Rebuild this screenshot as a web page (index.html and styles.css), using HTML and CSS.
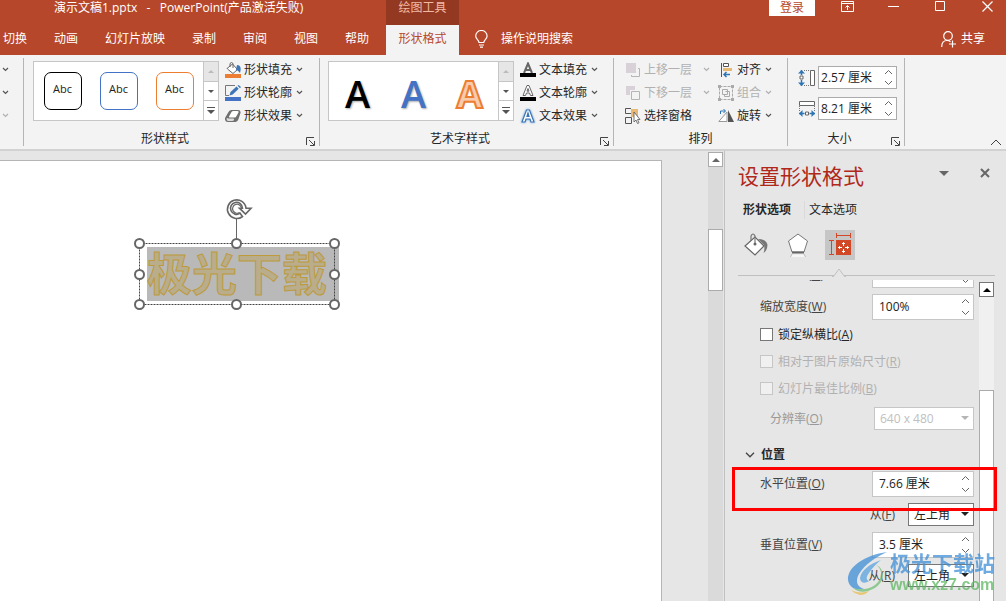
FILE: index.html
```html
<!DOCTYPE html>
<html lang="zh-CN">
<head>
<meta charset="utf-8">
<title>演示文稿1.pptx - PowerPoint</title>
<link rel="stylesheet" href="styles.css">
</head>
<body>
<svg class="defs" aria-hidden="true">
  <symbol id="chev" viewBox="0 0 7 5"><path d="M1 1l2.500 2.500L6 1" fill="none" stroke="currentColor" stroke-width="1.2"/></symbol>
  <symbol id="chev-up" viewBox="0 0 9 6"><path d="M1 5l3.500-3.500L8 5" fill="none" stroke="currentColor"/></symbol>
  <symbol id="chev-down" viewBox="0 0 9 6"><path d="M1 1l3.500 3.500L8 1" fill="none" stroke="currentColor"/></symbol>
  <symbol id="tri-up" viewBox="0 0 8 4"><path d="M0 4l4-4 4 4z" fill="currentColor"/></symbol>
  <symbol id="tri-down" viewBox="0 0 8 4"><path d="M0 0l4 4 4-4z" fill="currentColor"/></symbol>
  <symbol id="more" viewBox="0 0 8 7"><path d="M0 .5h8" stroke="currentColor"/><path d="M0 3l4 4 4-4z" fill="currentColor"/></symbol>
  <symbol id="launch" viewBox="0 0 9 9"><path d="M.5 8V.5H8M3 3l5 5M8.500 4v4.500H4" fill="none" stroke="#444"/></symbol>
</svg>
<div class="app">
  <header class="titlebar">
    <div class="doc-title">演示文稿1.pptx&nbsp;&nbsp; -&nbsp;&nbsp; PowerPoint(产品激活失败)</div>
    <div class="context-title">绘图工具</div>
    <div class="window-tools">
      <button class="login">登录</button>
      <button class="win" aria-label="功能区显示选项"><svg width="13" height="11" viewBox="0 0 13 11"><path d="M.5 .5h12v10H.5zM.5 2.500h12M6.500 9V4.500M4.500 6.500l2-2 2 2" fill="none" stroke="#fff"/></svg></button>
      <button class="win" aria-label="最小化"><svg width="11" height="11" viewBox="0 0 11 11"><path d="M0 5.500h11" stroke="#fff"/></svg></button>
      <button class="win" aria-label="最大化"><svg width="11" height="11" viewBox="0 0 11 11"><path d="M.5 .5h9v9h-9z" fill="none" stroke="#fff"/></svg></button>
      <button class="win" aria-label="关闭"><svg width="11" height="11" viewBox="0 0 11 11"><path d="M.5 .5l10 10M10.500 .5l-10 10" stroke="#fff" stroke-width="1.2"/></svg></button>
    </div>
    <nav class="tabs">
      <button>切换</button><button>动画</button><button>幻灯片放映</button><button>录制</button><button>审阅</button><button>视图</button><button>帮助</button>
    </nav>
    <button class="tab-active">形状格式</button>
    <div class="tab-tools">
      <button class="tell"><svg width="13" height="18" viewBox="0 0 13 18"><path d="M4 12.500c0-2.500-3.300-3.500-3.300-6.500a5.600 5.400 0 0 1 11.400 0c0 3-3.300 4-3.300 6.500zM4 15h5M5 17.200h3" fill="none" stroke="#fff" stroke-width="1.200"/></svg>操作说明搜索</button>
      <button class="share"><svg width="16" height="17" viewBox="0 0 16 17"><path d="M.7 16c0-4 2-6.500 5.300-6.500 1.500 0 2.500.4 3.500 1.200M11.500 9.500v7M8 13h7" fill="none" stroke="#fff" stroke-width="1.200"/><circle cx="7" cy="5" r="4.300" fill="none" stroke="#fff" stroke-width="1.200"/></svg>共享</button>
    </div>
  </header>

  <section class="ribbon">
    <div class="group cut">
      <div class="stack"><button class="cmd"><svg class="chev"><use href="#chev"/></svg></button><button class="cmd"><svg class="chev"><use href="#chev"/></svg></button><button class="cmd" disabled><svg class="chev"><use href="#chev"/></svg></button></div>
    </div>
    <div class="group">
      <div class="content styles">
        <div class="gallery">
          <div class="tiles"><button class="tile black">Abc</button><button class="tile blue">Abc</button><button class="tile orange">Abc</button></div>
          <div class="gallery-nav"><button disabled aria-label="上一行"><svg width="6" height="3"><use href="#tri-up"/></svg></button><button aria-label="下一行"><svg width="6" height="3"><use href="#tri-down"/></svg></button><button aria-label="其他"><svg width="8" height="7"><use href="#more"/></svg></button></div>
        </div>
        <div class="stack">
          <button class="cmd"><svg width="16" height="16" viewBox="0 0 16 16"><path d="M2 6.500L7.500 2l5 5.500L8 11.500 2.500 7z" fill="#fff" stroke="#666"/><path d="M5 5V1.500Q6.500-.5 8 1.500V6" fill="none" stroke="#666"/><path d="M12 3c3.500 0 4.500 3 3 8C14 9.500 12.500 8 11 8z" fill="#3e76b5"/><path d="M0 12h16v4H0z" fill="#ed7d31"/></svg>形状填充<svg class="chev"><use href="#chev"/></svg></button>
          <button class="cmd"><svg width="16" height="16" viewBox="0 0 16 16"><path d="M10 .5H.5v10H4" fill="none" stroke="#777"/><path d="M4.500 10.500l1-3.500 6-5.500 2.200 2.200-6 5.800z" fill="#3e76b5"/><path d="M12.500 .8l1-.8L16 2l-1 1.200z" fill="#3e76b5"/><path d="M0 12h16v4H0z" fill="#4472c4"/></svg>形状轮廓<svg class="chev"><use href="#chev"/></svg></button>
          <button class="cmd"><svg width="16" height="16" viewBox="0 0 16 16"><path d="M0 10l3.500-6q1-2 3-2h6.500q3 0 2.500 3l-2 6q-1 3-3.500 3H3q-3.500 0-3-4z" fill="#707070"/><path d="M4 8.500L6.500 4q.5-1 2-1h4q1.700 0 1 1.500L11.500 8q-.5 1.500-2 1.500H5q-1.500 0-1-1z" fill="#fff"/><path d="M1.500 10.500q.5-1 2 0h5q1 .5.500 1.500t-2 1H3q-1.500-.5-1.500-2.500z" fill="#ddd"/></svg>形状效果<svg class="chev"><use href="#chev"/></svg></button>
        </div>
      </div>
      <div class="caption"><span>形状样式</span><button class="launch" aria-label="形状样式选项"><svg width="9" height="9"><use href="#launch"/></svg></button></div>
    </div>
    <div class="group">
      <div class="content art">
        <div class="gallery">
          <div class="tiles letters"><button class="wa black">A</button><button class="wa blue">A</button><button class="wa orange">A</button></div>
          <div class="gallery-nav"><button disabled aria-label="上一行"><svg width="6" height="3"><use href="#tri-up"/></svg></button><button aria-label="下一行"><svg width="6" height="3"><use href="#tri-down"/></svg></button><button aria-label="其他"><svg width="8" height="7"><use href="#more"/></svg></button></div>
        </div>
        <div class="stack">
          <button class="cmd"><svg width="16" height="16" viewBox="0 0 16 16"><path d="M4 11L8 1.500 12 11M5.500 8h5" fill="none" stroke="#666" stroke-width="2"/><path d="M0 11h16v4H0z"/></svg>文本填充<svg class="chev"><use href="#chev"/></svg></button>
          <button class="cmd"><svg width="16" height="16" viewBox="0 0 16 16"><path d="M3 10.500L7 .5h2l4 10h-2.500L9.500 8h-3l-1 2.500zM7 6.200h2L8 3.500z" fill="#fff" stroke="#666"/><path d="M0 12h16v4H0z"/></svg>文本轮廓<svg class="chev"><use href="#chev"/></svg></button>
          <button class="cmd"><svg class="glow" width="16" height="16" viewBox="0 0 16 16"><path d="M2 14L6.500 2h3L14 14h-3l-1-3H6l-1 3zM7 8.500h2L8 5z" fill="#fff" stroke="#3e76b5" stroke-width="1.200"/></svg>文本效果<svg class="chev"><use href="#chev"/></svg></button>
        </div>
      </div>
      <div class="caption"><span>艺术字样式</span><button class="launch" aria-label="艺术字样式选项"><svg width="9" height="9"><use href="#launch"/></svg></button></div>
    </div>
    <div class="group">
      <div class="content arrange">
        <div class="stack">
          <button class="cmd wide" disabled><svg width="16" height="16" viewBox="0 0 16 16"><path d="M1 1h10v10H1z" fill="#d8d2d8"/><path d="M13 6.500h1.500v8h-8V13" fill="none" stroke="#b5b5b5"/></svg>上移一层<svg class="chev"><use href="#chev"/></svg></button>
          <button class="cmd wide" disabled><svg width="16" height="16" viewBox="0 0 16 16"><path d="M1 1h9v4H5v5H1z" fill="#d8d2d8"/><path d="M6.500 6.500h8v8h-8z" fill="none" stroke="#b5b5b5"/></svg>下移一层<svg class="chev"><use href="#chev"/></svg></button>
          <button class="cmd wide"><svg width="16" height="16" viewBox="0 0 16 16"><path d="M6 1h7v8H6z" fill="#e9b872"/><path d="M6 .5H.5v5H6M.5 9.500h6v6h-6z" fill="none" stroke="#555"/><path d="M9 4v10l2-2 1.500 3.500 1.500-.7-1.500-3.300H15z" fill="#fff" stroke="#555" stroke-width=".8"/></svg>选择窗格</button>
        </div>
        <div class="stack">
          <button class="cmd"><svg width="16" height="16" viewBox="0 0 16 16"><path d="M3.500 1v14" stroke="#555"/><path d="M5.500 1.500h5v3h-5z" fill="#fff" stroke="#555"/><path d="M5 6h9v3H5z" fill="#e9b872"/><path d="M12 12.500H6M8.500 10L6 12.500 8.500 15" fill="none" stroke="#2e75b6" stroke-width="1.500"/></svg>对齐<svg class="chev"><use href="#chev"/></svg></button>
          <button class="cmd" disabled><svg width="16" height="16" viewBox="0 0 16 16"><path d="M1.500 1.500h13v13h-13z" fill="none" stroke="#aaa" stroke-dasharray="3 1"/><path d="M0 0h3v3H0zM13 0h3v3h-3zM0 13h3v3H0zM13 13h3v3h-3z" fill="#aaa"/><path d="M4.500 4.500h5v5h-5zM7.500 6.500h4v5h-5v-2" fill="none" stroke="#aaa"/></svg>组合<svg class="chev"><use href="#chev"/></svg></button>
          <button class="cmd"><svg width="16" height="16" viewBox="0 0 16 16"><path d="M9 4v9.500H.8z" fill="#fff" stroke="#999"/><path d="M10 2v12h6z" fill="#555"/><path d="M2.500 6V3H7M5.500 1L7.500 3l-2 2" fill="none" stroke="#2e75b6"/></svg>旋转<svg class="chev"><use href="#chev"/></svg></button>
        </div>
      </div>
      <div class="caption centered"><span>排列</span></div>
    </div>
    <div class="group">
      <div class="content size">
        <label class="size-row" title="高度"><svg width="18" height="18" viewBox="0 0 18 18"><path d="M3.500 1v16" stroke="#2e75b6" stroke-width="1.500"/><path d="M0 4.500L3.500 1 7 4.500zM0 13.500L3.500 17 7 13.500z" fill="#2e75b6"/><path d="M1 6h5v5H1z" fill="#f3f3f3"/><path d="M2 7h3v3H2z" fill="#fff" stroke="#666"/><path d="M6 1.500h6M6 16.500h6" stroke="#777" stroke-dasharray="1 1"/><path d="M12.500 1.500h4v15h-4z" fill="#fff" stroke="#666"/></svg><span class="spin"><input type="text" value="2.57 厘米" aria-label="高度"><span class="steps"><button aria-label="增加"><svg width="9" height="6"><use href="#chev-up"/></svg></button><button aria-label="减少"><svg width="9" height="6"><use href="#chev-down"/></svg></button></span></span></label>
        <label class="size-row" title="宽度"><svg width="18" height="18" viewBox="0 0 18 18"><path d="M1.500 1.500h15v4h-15z" fill="#fff" stroke="#666"/><path d="M1.500 6v6M16.500 6v6" stroke="#777" stroke-dasharray="1 1"/><path d="M1 13.500h16" stroke="#2e75b6" stroke-width="1.500"/><path d="M4.500 10L1 13.500 4.500 17zM13.500 10l3.500 3.500-3.500 3.500z" fill="#2e75b6"/><path d="M6.500 11h5v5h-5z" fill="#f3f3f3"/><path d="M7.500 12h3v3h-3z" fill="#fff" stroke="#666"/></svg><span class="spin"><input type="text" value="8.21 厘米" aria-label="宽度"><span class="steps"><button aria-label="增加"><svg width="9" height="6"><use href="#chev-up"/></svg></button><button aria-label="减少"><svg width="9" height="6"><use href="#chev-down"/></svg></button></span></span></label>
      </div>
      <div class="caption"><span>大小</span><button class="launch" aria-label="大小选项"><svg width="9" height="9"><use href="#launch"/></svg></button></div>
    </div>
    <button class="collapse" aria-label="折叠功能区"><svg width="12" height="7" viewBox="0 0 12 7"><path d="M1 6l5-5 5 5" fill="none" stroke="#444"/></svg></button>
  </section>

  <main class="workspace">
    <div class="slide">
      <div class="shape">
        <span class="shape-text">极光下载</span>
        <svg class="handles" width="206" height="108" viewBox="0 0 206 108">
          <path d="M5.500 44.500h195v61H5.500z" fill="none" stroke="#444" stroke-dasharray="2 1"/>
          <path d="M102.500 20v21" stroke="#666"/>
          <g fill="#fff" stroke="#666" stroke-width="2"><circle cx="5.500" cy="44.500" r="4.500"/><circle cx="102.500" cy="44.500" r="4.500"/><circle cx="200.500" cy="44.500" r="4.500"/><circle cx="5.500" cy="75.500" r="4.500"/><circle cx="200.500" cy="75.500" r="4.500"/><circle cx="5.500" cy="105.500" r="4.500"/><circle cx="102.500" cy="105.500" r="4.500"/><circle cx="200.500" cy="105.500" r="4.500"/></g>
          <path d="M108.500 17.500a9.300 9.300 0 1 1 3.500-8.300h5L111.500 15l-6-5.800h3a6 6 0 1 0-2.500 5z" fill="#fff" stroke="#666" stroke-width="1.600"/><path d="M105.500 13.500a4.500 4.500 0 1 1 2-4.500" fill="none" stroke="#666" stroke-width="1.200"/>
        </svg>
      </div>
    </div>
    <div class="scroll doc-scroll"><button aria-label="向上滚动"><svg width="8" height="4"><use href="#tri-up"/></svg></button><div class="thumb"></div></div>

    <aside class="pane">
      <div class="pane-head"><h1>设置形状格式</h1><button aria-label="任务窗格选项"><svg width="10" height="5" viewBox="0 0 10 5"><path d="M0 0h10L5 5z" fill="#666"/></svg></button><button aria-label="关闭窗格"><svg width="10" height="10" viewBox="0 0 10 10"><path d="M1 1l8 8M9 1L1 9" stroke="#666" stroke-width="2"/></svg></button></div>
      <div class="pane-tabs"><button class="on">形状选项</button><button>文本选项</button></div>
      <div class="pane-icons">
        <button aria-label="填充与线条"><svg width="24" height="24" viewBox="0 0 24 24"><path d="M1 13L11 4l9 9-9 9z" fill="#fff" stroke="#666" stroke-width="1.200"/><path d="M7 8V3q2-4 4 0v8" fill="none" stroke="#777" stroke-width="1.200"/><circle cx="11" cy="11" r="1.500" fill="#666"/><path d="M14 6q8.500 0 9.500 6-.5 6-4 8 1.500-4 .5-8z" fill="#777"/></svg></button>
        <button aria-label="效果"><svg width="24" height="24" viewBox="0 0 24 24"><path d="M12 1l9.500 7L18 19H6L2.500 8z" fill="#fff" stroke="#777"/><path d="M6 19.500h12" stroke="#666" stroke-width="2"/><path d="M6 21.500h12l1.500 2.500h-15z" fill="#f6f6f6"/><path d="M6 21l-1.500 3M18 21l1.500 3" stroke="#bbb"/></svg></button>
        <button class="on" aria-label="大小与属性"><svg width="24" height="24" viewBox="0 0 24 24"><path d="M8.500 2.500h14M8.500 0v5M22.500 0v5M3.500 7.500v14M1 7.500h5M1 21.500h5" fill="none" stroke="#d24726"/><path d="M8 7h15v15H8z" fill="#d24726"/><path d="M15.500 9v4M15.500 16v4M10 14.500h4M17 14.500h4M14 11l1.500-1.500L17 11M14 18l1.500 1.500L17 18M12 13l-1.500 1.500L12 16M19 13l1.500 1.500L19 16" fill="none" stroke="#fff"/></svg></button>
      </div>
      <svg class="notch" width="14" height="9" viewBox="0 0 14 9"><path d="M0 8.500h1.500L7 1l5.500 7.500H14" fill="#e6e6e6" stroke="#c0c0c0"/></svg>
      <div class="pane-view">
        <form class="props">
          <div class="row first"><label for="sh">缩放高度(<u>H</u>)</label><span class="spin"><input id="sh" type="text" value="100%"><span class="steps"><button type="button" aria-label="增加"><svg width="9" height="6"><use href="#chev-up"/></svg></button><button type="button" aria-label="减少"><svg width="9" height="6"><use href="#chev-down"/></svg></button></span></span></div>
          <div class="row"><label for="sw">缩放宽度(<u>W</u>)</label><span class="spin"><input id="sw" type="text" value="100%"><span class="steps"><button type="button" aria-label="增加"><svg width="9" height="6"><use href="#chev-up"/></svg></button><button type="button" aria-label="减少"><svg width="9" height="6"><use href="#chev-down"/></svg></button></span></span></div>
          <div class="checks">
            <label><input type="checkbox">锁定纵横比(<u>A</u>)</label>
            <label class="off"><input type="checkbox" disabled>相对于图片原始尺寸(<u>R</u>)</label>
            <label class="off"><input type="checkbox" disabled>幻灯片最佳比例(<u>B</u>)</label>
          </div>
          <div class="row resolution"><label for="res">分辨率(<u>O</u>)</label><span class="pick"><select id="res" disabled><option>640 x 480</option></select><svg width="8" height="4"><use href="#tri-down"/></svg></span></div>
          <h2><svg width="10" height="6" viewBox="0 0 10 6"><path d="M1 .8l4 4 4-4" fill="none" stroke="#444" stroke-width="1.300"/></svg>位置</h2>
          <div class="row"><label for="px">水平位置(<u>O</u>)</label><span class="spin"><input id="px" type="text" value="7.66 厘米"><span class="steps"><button type="button" aria-label="增加"><svg width="9" height="6"><use href="#chev-up"/></svg></button><button type="button" aria-label="减少"><svg width="9" height="6"><use href="#chev-down"/></svg></button></span></span></div>
          <div class="row from"><label for="fx">从(<u>F</u>)</label><span class="pick"><select id="fx"><option>左上角</option></select><svg width="8" height="4"><use href="#tri-down"/></svg></span></div>
          <div class="row"><label for="py">垂直位置(<u>V</u>)</label><span class="spin"><input id="py" type="text" value="3.5 厘米"><span class="steps"><button type="button" aria-label="增加"><svg width="9" height="6"><use href="#chev-up"/></svg></button><button type="button" aria-label="减少"><svg width="9" height="6"><use href="#chev-down"/></svg></button></span></span></div>
          <div class="row from"><label for="fy">从(<u>R</u>)</label><span class="pick"><select id="fy"><option>左上角</option></select><svg width="8" height="4"><use href="#tri-down"/></svg></span></div>
        </form>
        <div class="scroll pane-scroll"><button aria-label="向上滚动"><svg width="8" height="4"><use href="#tri-up"/></svg></button><div class="thumb"></div></div>
      </div>
      <div class="highlight"></div>
      <div class="watermark">
        <svg width="44" height="44" viewBox="0 0 44 44"><path d="M40 1C18 4 0 16 1 29c1 8 9 11 16 9C10 36 8 30 12 23 18 13 29 6 40 1z" fill="#3f8fd6"/><path d="M34 9C22 13 14 20 13 27c0 5 5 6 9 3-3-1-3-4 0-8 3-5 7-9 12-13z" fill="#5aa3df"/><path d="M29 14c7 4 7 14-1 20-7 5-15 5-22 3 3 3 9 5 15 3 11-3 17-12 14-20-1-3-3-5-6-6z" fill="#6fbf73"/><path d="M4 39c6 3 12 3 18 1-3 3-6 4-9 4-4-1-7-3-9-5z" fill="#e7bd4d"/></svg>
        <div><b>极光下载站</b><span>www.xz7.com</span></div>
      </div>
    </aside>
  </main>
</div>
</body>
</html>
```
FILE: styles.css
```css
* { box-sizing: border-box; }
body { margin: 0; font: 12px/16px "Open Sans", "Noto Sans CJK SC", sans-serif; color: #262626; }
button, input, select { font: inherit; color: inherit; margin: 0; padding: 0; border: 0; background: none; }
svg { display: block; flex: none; }
.defs { position: absolute; width: 0; height: 0; }
.app { display: flex; flex-direction: column; height: 100vh; overflow: hidden; background: #e6e6e6; }

/* Title bar and tabs */
.titlebar { display: grid; grid-template-columns: auto auto 1fr; grid-template-rows: 25px 30px; background: #b7472a; color: #fff; }
.doc-title { padding-left: 54px; white-space: nowrap; }
.context-title { background: #933922; color: #f1b9a6; text-align: center; }
.window-tools { display: flex; justify-content: flex-end; align-items: flex-start; padding-right: 14px; }
.login { background: #fff; color: #b7472a; width: 46px; height: 16px; line-height: 14px; margin-right: 26px; }
.win { display: flex; justify-content: flex-start; height: 12px; width: 47px; align-items: center; }
.win:last-child { width: 10px; }
.tabs { display: flex; gap: 27px; padding: 0 17px 0 3px; }
.tabs button { white-space: nowrap; padding-bottom: 2px; }
.tab-active { background: #f3f3f3; color: #b7472a; width: 73px; padding-bottom: 2px; }
.tab-tools { display: flex; justify-content: space-between; padding: 0 21px 0 16px; }
.tell, .share { display: flex; align-items: center; padding-bottom: 2px; }
.tell { gap: 13px; }
.share { gap: 4px; }

/* Ribbon */
.ribbon { display: flex; height: 96px; padding: 3px 0; background: #f3f3f3; border-bottom: 2px solid #d2d2d2; }
.group { display: flex; flex-direction: column; justify-content: space-between; border-right: 1px solid #b5b5b5; }
.cut { width: 24px; padding-left: 1px; }
.content { display: flex; gap: 6px; }
.styles { padding: 0 16px 0 9px; }
.art { padding: 0 15px 0 8px; }
.arrange { padding: 0 15px 0 11px; gap: 8px; }
.size { flex-direction: column; gap: 8px; padding: 8px 7px 0 10px; }
.stack { display: flex; flex-direction: column; }
.cmd { display: flex; align-items: center; gap: 3px; height: 23px; white-space: nowrap; }
.chev { width: 7px; height: 5px; margin-left: 1px; color: #555; }
.wide .chev { margin-left: 8px; }
.cmd:disabled, .cmd:disabled .chev { color: #b1b1b1; }
.glow { filter: drop-shadow(0 0 1px #5b9bd5); }
.gallery { display: flex; width: 186px; height: 60px; margin-top: 3px; background: #fff; border: 1px solid #c6c6c6; }
.tiles { flex: 1; display: flex; align-items: center; justify-content: center; gap: 18px; }
.tile { width: 38px; height: 38px; border: 1px solid; border-radius: 7px; font-size: 11px; padding-bottom: 4px; color: #222; }
.tile.black { border-color: #000; }
.tile.blue { border-color: #4472c4; }
.tile.orange { border-color: #ed7d31; }
.letters { gap: 22px; padding-top: 4px; }
.wa { width: 34px; font-size: 38px; line-height: 40px; font-weight: 600; text-shadow: 1px 1px 2px #aaa; }
.wa.black { color: #000; }
.wa.blue { color: #4472c4; }
.wa.orange { color: #f8cbad; font-weight: 700; text-shadow: none; -webkit-text-stroke: 2px #ed7d31; }
.gallery-nav { display: flex; flex-direction: column; width: 15px; border-left: 1px solid #c6c6c6; }
.gallery-nav button { flex: 1; display: flex; align-items: center; justify-content: center; color: #555; }
.gallery-nav button + button { border-top: 1px solid #c6c6c6; }
.gallery-nav button:disabled { background: #e6e6e6; color: #bbb; }
.caption { display: flex; align-items: flex-end; padding-right: 4px; }
.caption span { flex: 1; text-align: center; line-height: 14px; }
.caption.centered { padding: 0; }
.launch { height: 9px; }
.size-row { display: flex; align-items: center; gap: 2px; }
.size-row .spin { width: 79px; height: 23px; border-color: #ababab; }
.collapse { margin-left: auto; align-self: flex-end; padding-right: 4px; }

.spin { display: flex; width: 102px; height: 26px; background: #fff; border: 1px solid #c6c6c6; }
.spin input { flex: 1; min-width: 0; padding-left: 2px; color: #222; outline: 0; }
.steps { display: flex; flex-direction: column; justify-content: space-around; width: 12px; color: #666; }

/* Slide */
.workspace { flex: 1; display: flex; min-height: 0; }
.slide { flex: 1; margin: 9px 46px 0 0; background: #fff; border: 1px solid #b5b5b5; border-width: 1px 1px 0 0; position: relative; }
.shape { position: absolute; left: 134px; top: 38px; width: 206px; height: 108px; }
.shape-text { position: absolute; left: 13px; top: 48px; width: 192px; height: 54px; background: #b9b9b9; color: #b9ad8c; font-size: 45px; line-height: 54px; font-weight: 700; white-space: nowrap; -webkit-text-stroke: 1px #bd9a3c; }
.handles { position: absolute; left: 0; top: 0; overflow: visible; }
.scroll { display: flex; flex-direction: column; width: 15px; flex: none; }
.scroll button { display: flex; align-items: center; justify-content: center; height: 15px; background: #fff; border: 1px solid #ababab; color: #666; }
.thumb { background: #fff; border: 1px solid #ababab; }
.doc-scroll { margin-top: 1px; background: #dadada; }
.doc-scroll .thumb { height: 62px; margin-top: 62px; }

/* Format pane */
.pane { position: relative; flex: none; width: 282px; margin-left: 1px; padding-left: 13px; border-left: 1px solid #c0c0c0; display: flex; flex-direction: column; }
.pane-head { display: flex; align-items: center; height: 44px; padding: 6px 16px 0 0; }
.pane-head h1 { flex: 1; margin: 0; font-size: 21px; line-height: 28px; font-weight: 400; color: #b0281a; }
.pane-head button { padding-bottom: 6px; margin-left: 31px; }
.pane-tabs { display: flex; height: 28px; padding: 6px 0 0 5px; }
.pane-tabs button { height: 18px; line-height: 16px; padding-right: 13px; }
.pane-tabs button + button { border-left: 1px solid #dadada; padding-left: 4px; }
.pane-tabs .on { font-weight: 700; }
.pane-icons { display: flex; gap: 12px; padding: 7px 0 15px 3px; margin-right: 11px; border-bottom: 1px solid #c0c0c0; }
.pane-icons button { display: flex; align-items: center; justify-content: center; width: 30px; height: 30px; }
.pane-icons .on { background: #c6c6c6; }
.notch { position: absolute; left: 107px; top: 117px; }
.pane-view { flex: 1; display: flex; min-height: 0; margin-top: 4px; padding-right: 12px; overflow: hidden; }
.props { flex: 1; padding: 0 5px 0 22px; }
.row { display: flex; align-items: center; justify-content: space-between; margin-bottom: 6px; color: #444; }
.row .spin input { padding-left: 6px; }
.first { margin-top: -18px; }
.checks label { display: flex; align-items: center; height: 27px; }
.checks { margin-top: -5px; }
.checks input { appearance: none; width: 13px; height: 13px; margin-right: 5px; background: #fff; border: 1px solid #777; }
.checks .off { color: #b1b1b1; }
.checks .off input { background: #f0f0f0; border-color: #c6c6c6; }
.pick { position: relative; width: 66px; }
.pick select { appearance: none; display: block; width: 100%; height: 23px; padding-left: 5px; background: #fff; border: 1px solid #777; border-radius: 0; color: #222; }
.pick svg { position: absolute; right: 5px; top: 9px; color: #222; pointer-events: none; }
.resolution { padding-left: 10px; margin: 5px 0 14px; color: #999; }
.resolution .pick { width: 100px; }
.resolution select { border-color: #c6c6c6; color: #c0c0c0; opacity: 1; }
.resolution svg { color: #b5b5b5; }
.from { justify-content: flex-end; gap: 13px; }
.props h2 { display: flex; align-items: center; gap: 6px; margin: 0 0 5px -15px; height: 22px; font-size: 12px; font-weight: 700; }
.pane-scroll { margin-top: 2px; background: #f0f0f0; }
.pane-scroll button { border-color: #777; color: #000; }
.pane-scroll .thumb { flex: 1; margin-top: 93px; border-bottom: 0; }

.highlight { position: absolute; left: 7px; right: 9px; top: 316px; height: 44px; border: 3px solid #f00; pointer-events: none; }
.watermark { position: absolute; right: 11px; bottom: 6px; display: flex; gap: 1px; opacity: .75; pointer-events: none; }
.watermark div { display: flex; flex-direction: column; margin-left: -2px; }
.watermark b { font-size: 21px; line-height: 24px; color: #3f8fd6; }
.watermark span { font: 700 16px/20px "Liberation Sans", sans-serif; color: #5db761; }
```
